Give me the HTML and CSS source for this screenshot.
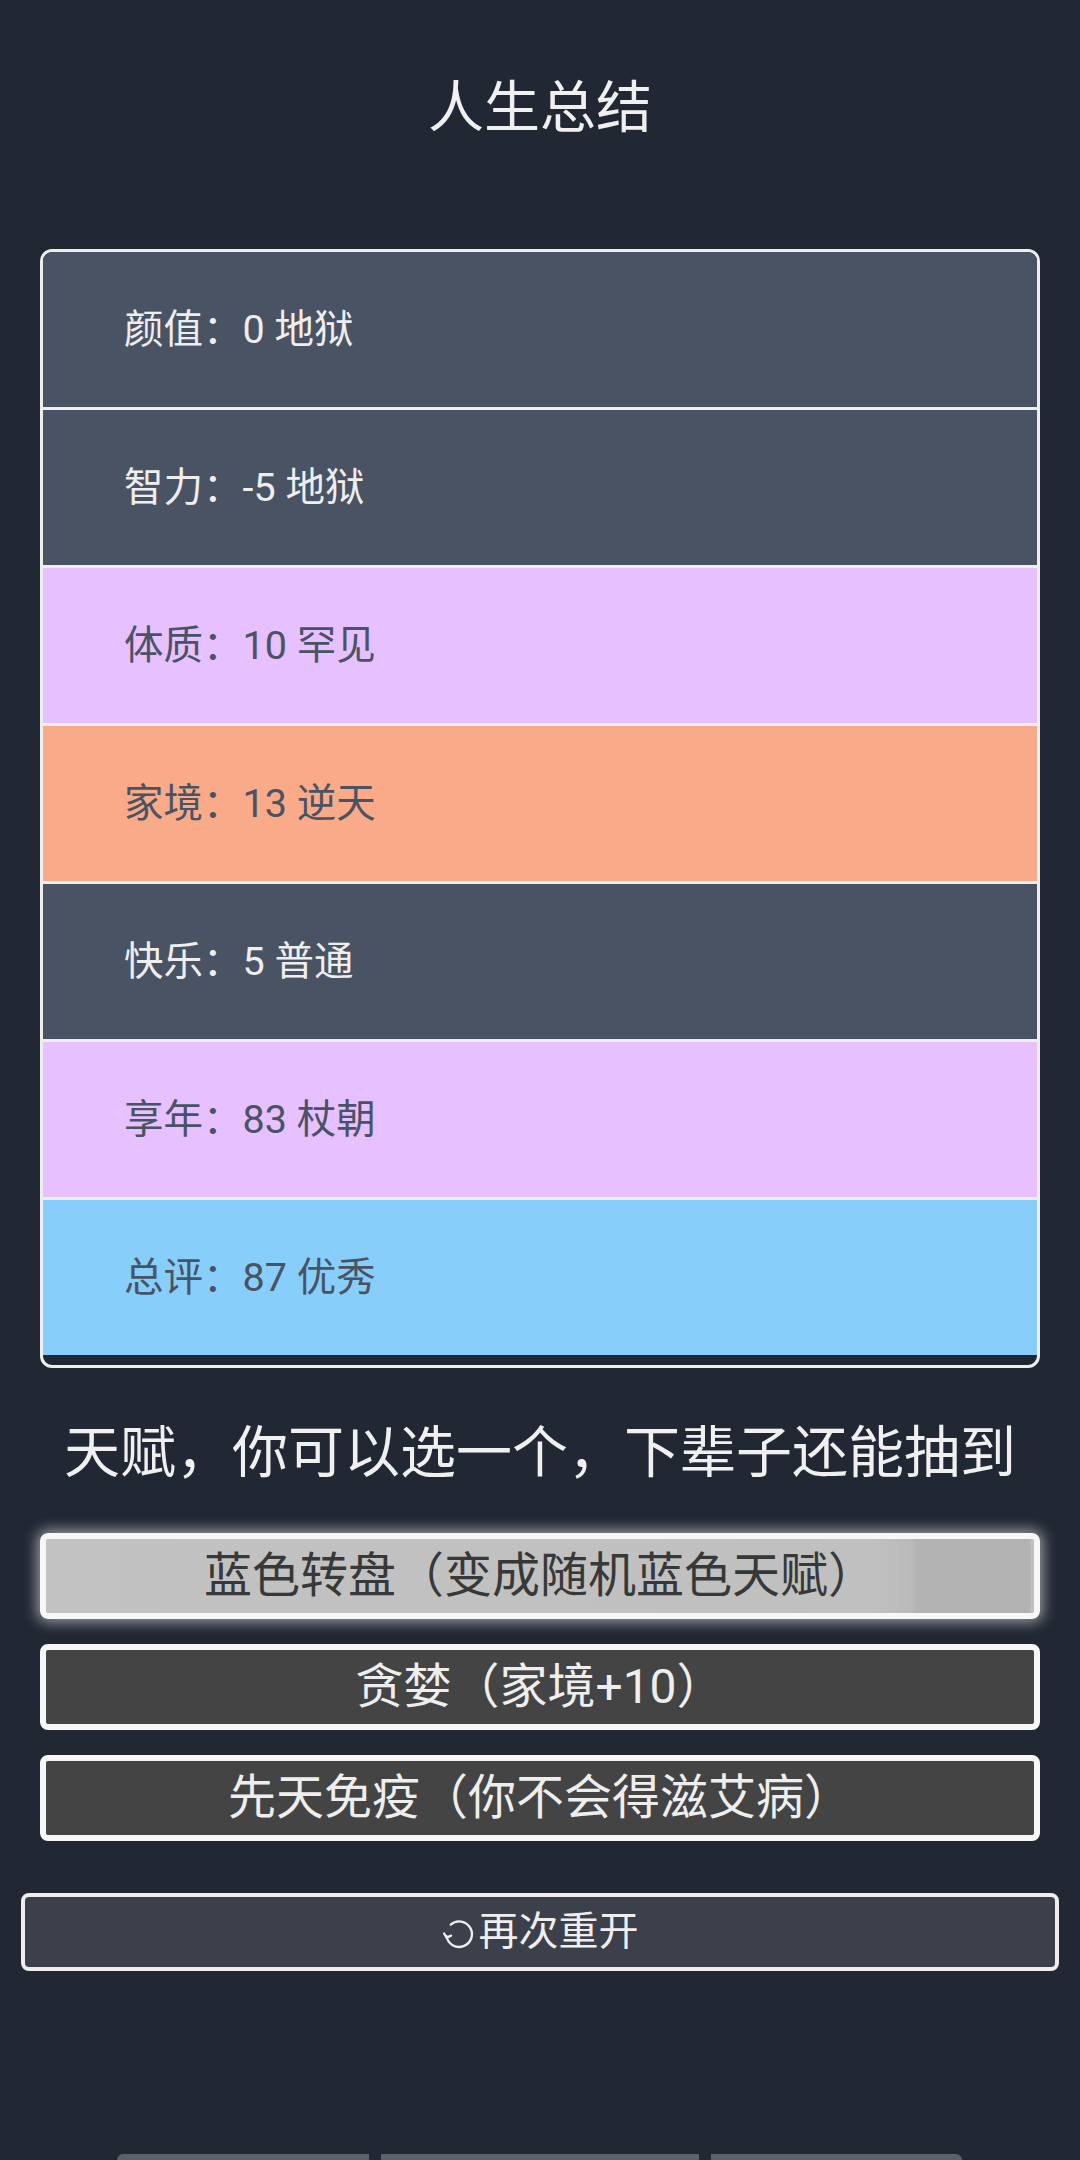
FILE: index.html
```html
<!DOCTYPE html>
<html lang="zh-CN">
<head>
<meta charset="utf-8">
<title>人生总结</title>
<link rel="stylesheet" href="styles.css">
</head>
<body>
<div class="page">
  <h1 class="title">人生总结</h1>
  <div class="summary">
    <div class="row row-dark">颜值：0 地狱</div>
    <div class="row row-dark">智力：-5 地狱</div>
    <div class="row row-purple">体质：10 罕见</div>
    <div class="row row-orange">家境：13 逆天</div>
    <div class="row row-dark">快乐：5 普通</div>
    <div class="row row-purple">享年：83 杖朝</div>
    <div class="row row-blue">总评：87 优秀</div>
  </div>
  <h2 class="subtitle">天赋，你可以选一个，下辈子还能抽到</h2>
  <div class="talents">
    <div class="talent talent-selected">蓝色转盘（变成随机蓝色天赋）</div>
    <div class="talent">贪婪（家境+10）</div>
    <div class="talent">先天免疫（你不会得滋艾病）</div>
  </div>
  <div class="restart">
    <svg class="restart-icon" viewBox="0 0 32 32" width="34" height="34" aria-hidden="true">
      <path d="M8.2 7.2 A12 12 0 1 1 4.3 18" fill="none" stroke="#eeeeee" stroke-width="2.2" stroke-linecap="round"/>
      <path d="M2 15.5 L4.3 19.5 L8.5 17.5" fill="none" stroke="#eeeeee" stroke-width="2.2" stroke-linecap="round" stroke-linejoin="round"/>
    </svg>
    <span>再次重开</span>
  </div>
  <div class="bottom-bar">
    <div class="bb bb-left"></div>
    <div class="bb bb-mid"></div>
    <div class="bb bb-right"></div>
  </div>
</div>
</body>
</html>
```
FILE: styles.css
```css
html, body {
  margin: 0;
  padding: 0;
  background: #212733;
  height: 2160px;
  overflow: hidden;
}
body {
  font-family: Roboto, "Noto Sans CJK SC", sans-serif;
  color: #eeeeee;
}
.page {
  display: flex;
  flex-direction: column;
}
.title {
  margin: 0;
  padding-top: 72px;
  height: 72px;
  line-height: 72px;
  font-size: 56px;
  font-weight: 400;
  text-align: center;
  color: #f0f0f0;
}
.summary {
  margin: 105px 40px 0;
  border: 3px solid #eeeeee;
  border-radius: 12px;
  overflow: hidden;
  padding-bottom: 10px;
  background: #212733;
  display: flex;
  flex-direction: column;
}
.row {
  height: 155px;
  display: flex;
  align-items: center;
  padding-left: 81px;
  font-size: 39.5px;
  line-height: 1.2;
}
.row + .row {
  border-top: 3px solid #eeeeee;
}
.row-dark { background: #4a5363; color: #eeeeee; }
.row-purple { background: #e6c0ff; color: #4a5363; }
.row-orange { background: #f8aa89; color: #4a5363; }
.row-blue { background: #87cefa; color: #4a5363; }
.subtitle {
  margin: 49px 0 0;
  height: 72px;
  line-height: 72px;
  font-size: 56px;
  font-weight: 400;
  text-align: center;
  color: #f0f0f0;
}
.talents {
  margin: 44px 40px 0;
  display: flex;
  flex-direction: column;
  gap: 25px;
}
.talent {
  box-sizing: border-box;
  height: 86px;
  border: 6px solid #f7f7f7;
  border-radius: 8px;
  background: #444444;
  color: #eeeeee;
  font-size: 48px;
  line-height: 1.2;
  display: flex;
  align-items: center;
  justify-content: center;
}
.talent-selected {
  color: #383838;
  background: linear-gradient(to right, #c2c2c2 0%, #c0c0c0 84%, #b9b9b9 87.9%, #b3b3b3 88%, #b3b3b3 99.6%, #c0c0c0 99.7%);
  box-shadow: 0 0 14px 3px rgba(255, 255, 255, 0.55);
}
.restart {
  box-sizing: border-box;
  margin: 52px 21px 0;
  height: 78px;
  border: 4px solid #eeeeee;
  border-radius: 8px;
  background: #3c404a;
  color: #eeeeee;
  font-size: 40px;
  line-height: 1.2;
  display: flex;
  align-items: center;
  justify-content: center;
  gap: 3px;
}
.restart-icon {
  display: block;
  width: 34px;
  height: 34px;
  margin-top: 4px;
}
.bottom-bar {
  margin-top: 183px;
  padding-left: 117px;
  display: flex;
  gap: 12px;
}
.bb {
  height: 8px;
  background: #5a616b;
}
.bb-left { width: 252px; border-top-left-radius: 6px; }
.bb-mid { width: 318px; }
.bb-right { width: 251px; border-top-right-radius: 6px; }
```
